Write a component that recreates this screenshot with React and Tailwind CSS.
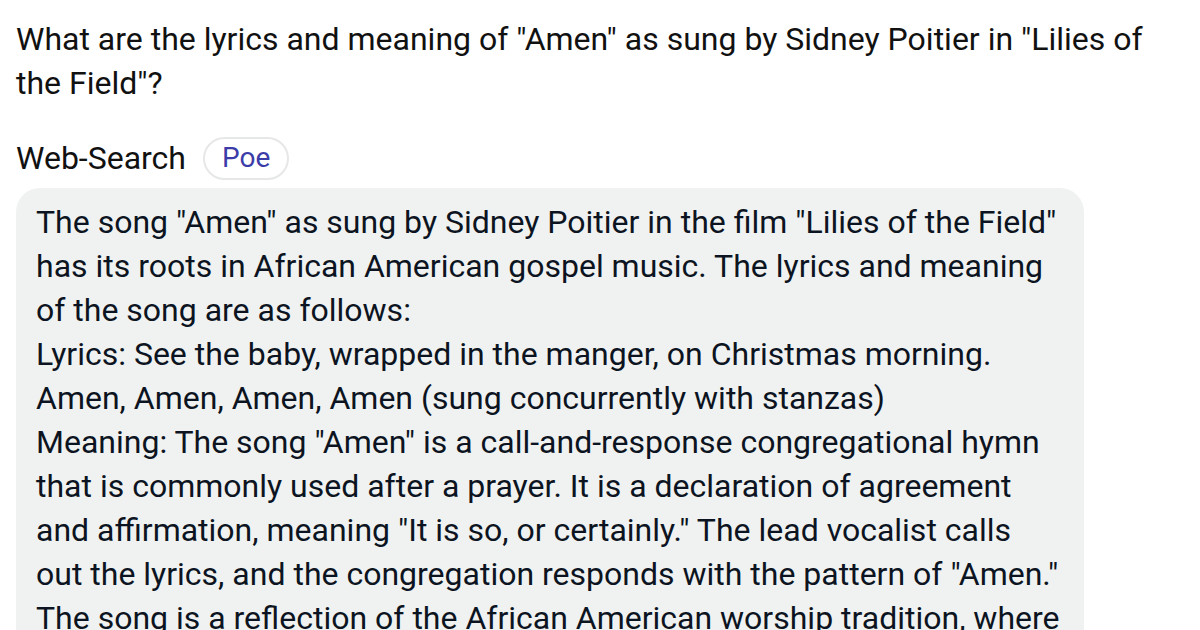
const answer = [
  'The song "Amen" as sung by Sidney Poitier in the film "Lilies of the Field" has its roots in African American gospel music. The lyrics and meaning of the song are as follows:',
  "Lyrics: See the baby, wrapped in the manger, on Christmas morning. Amen, Amen, Amen, Amen (sung concurrently with stanzas)",
  'Meaning: The song "Amen" is a call-and-response congregational hymn that is commonly used after a prayer. It is a declaration of agreement and affirmation, meaning "It is so, or certainly." The lead vocalist calls out the lyrics, and the congregation responds with the pattern of "Amen." The song is a reflection of the African American worship tradition, where',
];

export default function App() {
  return (
    <div className="w-[1200px] h-[630px] overflow-hidden bg-white px-4 pt-[17px] font-['Roboto',sans-serif]">
      {/* Question */}
      <p className="text-[32px] leading-[44px] text-[#111]">
        What are the lyrics and meaning of "Amen" as sung by Sidney Poitier in "Lilies of the Field"?
      </p>

      {/* Bot header */}
      <div className="mt-[31px] flex items-center gap-[17px]">
        <span className="text-[32px] leading-[44px] text-[#111]">Web-Search</span>
        <span className="h-[43px] px-[17px] flex items-center rounded-full border-2 border-[#e6e7e7] text-[28px] text-[#3c3ca8]">
          Poe
        </span>
      </div>

      {/* Answer bubble */}
      <div className="mt-[8px] w-[1068px] rounded-[24px] bg-[#f0f2f2] px-5 pt-[12px] pb-4 text-[32px] leading-[44px] text-[#0d1421]">
        {answer.map((p, i) => (
          <p key={i}>{p}</p>
        ))}
      </div>
    </div>
  );
}
